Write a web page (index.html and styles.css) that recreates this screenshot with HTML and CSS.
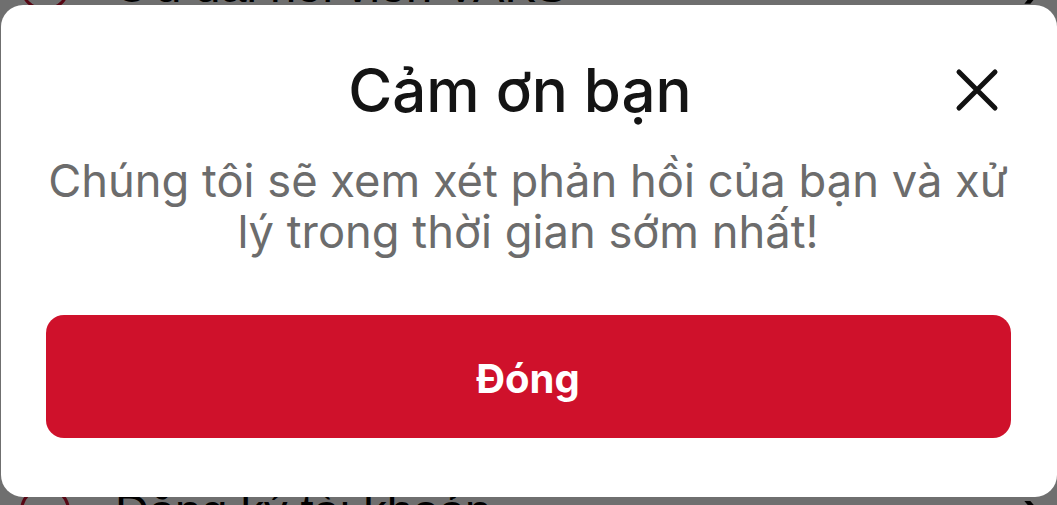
FILE: index.html
```html
<!DOCTYPE html>
<html>
<head>
  <meta charset='UTF-8'>
  <title>Cảm ơn bạn</title>
  <link rel="stylesheet" href="styles.css">
</head>
<body>
<div class="screen">
  <div class="list">
    <div class="item"><span class="icon"></span><span class="text">Ưu đãi hội viên VAKS</span><span class="chev">›</span></div>
    <div class="item"><span class="icon"></span><span class="text">Cài đặt</span><span class="chev">›</span></div>
    <div class="item"><span class="icon"></span><span class="text">Hỗ trợ</span><span class="chev">›</span></div>
    <div class="item"><span class="icon"></span><span class="text">Góp ý</span><span class="chev">›</span></div>
    <div class="item"><span class="icon"></span><span class="text">Điều khoản</span><span class="chev">›</span></div>
    <div class="item"><span class="icon"></span><span class="text">Đăng ký tài khoản</span><span class="chev">›</span></div>
  </div>

  <div class="overlay">
    <div class="modal">
      <div class="head">
        <span></span>
        <h2 class="title">Cảm ơn bạn</h2>
        <button class="close" aria-label="close">
          <svg width="44" height="44" viewBox="0 0 44 44"><path d="M4 4 L40 40 M40 4 L4 40" stroke="#111" stroke-width="5" stroke-linecap="round"/></svg>
        </button>
      </div>
      <p class="msg">Chúng tôi sẽ xem xét phản hồi của bạn và xử lý trong thời gian sớm nhất!</p>
      <button class="btn">Đóng</button>
    </div>
  </div>
</div>
</body>
</html>
```

FILE: styles.css
```css
body { margin: 0; background: #fff; font-family: Inter, "Noto Sans", sans-serif; }
.screen { position: relative; width: 1057px; height: 505px; overflow: hidden; }

.list { margin-top: -67px; }
.item { height: 105px; display: flex; align-items: center; padding: 0 20px 0 20px; gap: 45px; }
.icon { width: 44px; height: 44px; border: 3px solid #c8102e; border-radius: 50%; flex: none; }
.text { flex: 1; font-size: 47px; line-height: 1; color: #000; font-family: "Liberation Sans", sans-serif; }
.chev { font-size: 60px; line-height: 1; color: #000; margin-right: -8px; }

.overlay { position: absolute; inset: 0; background: rgba(0,0,0,0.565); display: flex; justify-content: center; align-items: flex-start; padding-top: 5px; }
.modal { width: 1056px; height: 492px; box-sizing: border-box; background: #fff; border-radius: 22px; padding: 50px 46px 0 45px; }

.head { display: grid; grid-template-columns: 1fr auto 1fr; align-items: center; }
.title { margin: 0; padding-right: 16px; font-size: 60px; line-height: 70px; font-weight: 500; color: #141414; }
.close { justify-self: end; margin-right: 12px; background: none; border: 0; padding: 0; width: 44px; height: 44px; display: flex; }

.msg { margin: 30px 0 0; text-align: center; font-size: 45.3px; line-height: 51px; color: #6c6c6c; }

.btn { display: block; width: 100%; height: 123px; margin-top: 58px; padding-top: 4px; border: 0; border-radius: 18px; background: #cf112b; color: #fff; font-family: Inter, sans-serif; font-size: 40px; font-weight: 700; }
```
